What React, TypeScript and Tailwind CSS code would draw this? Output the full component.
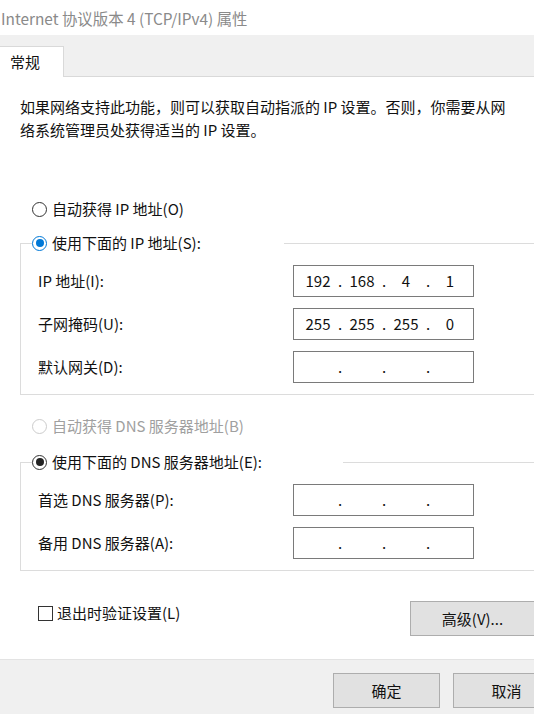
import { Fragment } from "react";

type RadioState = "off" | "blue" | "dark" | "disabled";

const Radio = ({ state }: { state: RadioState }) => {
  const ring =
    state === "blue" ? "border-[#0078d7]" : state === "disabled" ? "border-[#cccccc]" : "border-[#333333]";
  return (
    <span className={`flex h-[15px] w-[15px] shrink-0 items-center justify-center rounded-full border bg-white ${ring}`}>
      {state === "blue" && <span className="h-[8px] w-[8px] rounded-full bg-[#0078d7]" />}
      {state === "dark" && <span className="h-[8px] w-[8px] rounded-full bg-[#222222]" />}
    </span>
  );
};

const RadioRow = ({ state, label }: { state: RadioState; label: string }) => (
  <div className={`flex h-[22px] items-center gap-[5px] ${state === "disabled" ? "text-[#a0a0a0]" : "text-[#111]"}`}>
    <Radio state={state} />
    <span>{label}</span>
  </div>
);

const IpBox = ({ parts }: { parts: string[] }) => (
  <div className="flex h-[32px] w-[181px] items-center border border-[#7a7a7a] bg-white pl-[4px] text-[#111]">
    {parts.map((p, i) => (
      <Fragment key={i}>
        {i > 0 && <span className="w-[4px] text-center">.</span>}
        <span className="w-[40px] text-center">{p}</span>
      </Fragment>
    ))}
  </div>
);

const Field = ({ label, parts }: { label: string; parts: string[] }) => (
  <div className="flex items-center">
    <span className="w-[255px] text-[#111]">{label}</span>
    <IpBox parts={parts} />
  </div>
);

const Group = ({
  legend,
  legendWidth,
  radio,
  rows,
}: {
  legend: string;
  legendWidth: string;
  radio: RadioState;
  rows: { label: string; parts: string[] }[];
}) => (
  <fieldset className="ml-[20px] w-[560px] border border-[#dcdcdc] pb-[11px] pt-[11px]">
    <legend className={`ml-[11px] bg-white ${legendWidth}`}>
      <RadioRow state={radio} label={legend} />
    </legend>
    <div className="flex flex-col gap-[11px] pl-[17px]">
      {rows.map((r) => (
        <Field key={r.label} label={r.label} parts={r.parts} />
      ))}
    </div>
  </fieldset>
);

const Button = ({ label, width }: { label: string; width: string }) => (
  <button
    type="button"
    className={`h-[35px] shrink-0 border border-[#adadad] bg-[#e1e1e1] text-[15px] text-[#111] ${width}`}
  >
    {label}
  </button>
);

const empty = ["", "", "", ""];

export default function App() {
  return (
    <div className="h-[714px] w-[534px] overflow-hidden bg-white font-['Noto_Sans_CJK_SC',sans-serif] text-[15px] leading-[22px]">
      <div className="w-[600px]">
        <div className="flex h-[35px] items-center pl-[1px] text-[15.4px] text-[#8a8a8a]">
          Internet 协议版本 4 (TCP/IPv4) 属性
        </div>

        <div className="flex h-[42px] items-end bg-[#f0f0f0]">
          <div className="flex h-[31px] w-[64px] items-center border-r border-t border-[#d9d9d9] bg-white pl-[10px] text-[#111]">
            常规
          </div>
          <div className="flex-1 self-stretch border-b border-[#d9d9d9]" />
        </div>

        <div className="h-[582px] bg-white pt-[18px]">
          <p className="pl-[20px] leading-[23px] text-[#111]">
            如果网络支持此功能，则可以获取自动指派的 IP 设置。否则，你需要从网
            <br />
            络系统管理员处获得适当的 IP 设置。
          </p>

          <div className="mt-[57px] pl-[32px]">
            <RadioRow state="off" label="自动获得 IP 地址(O)" />
          </div>

          <div className="mt-[12px]">
            <Group
              legend="使用下面的 IP 地址(S):"
              legendWidth="w-[252px]"
              radio="blue"
              rows={[
                { label: "IP 地址(I):", parts: ["192", "168", "4", "1"] },
                { label: "子网掩码(U):", parts: ["255", "255", "255", "0"] },
                { label: "默认网关(D):", parts: empty },
              ]}
            />
          </div>

          <div className="mt-[20px] pl-[32px]">
            <RadioRow state="disabled" label="自动获得 DNS 服务器地址(B)" />
          </div>

          <div className="mt-[14px]">
            <Group
              legend="使用下面的 DNS 服务器地址(E):"
              legendWidth="w-[311px]"
              radio="dark"
              rows={[
                { label: "首选 DNS 服务器(P):", parts: empty },
                { label: "备用 DNS 服务器(A):", parts: empty },
              ]}
            />
          </div>

          <div className="mt-[30px] flex items-start">
            <div className="mt-[1px] flex h-[22px] w-[410px] items-center gap-[4px] pl-[38px] text-[#111]">
              <span className="h-[15px] w-[15px] shrink-0 border border-[#333333] bg-white" />
              <span>退出时验证设置(L)</span>
            </div>
            <Button label="高级(V)..." width="w-[125px]" />
          </div>
        </div>

        <div className="flex h-[55px] gap-[13px] border-t border-[#e3e3e3] bg-[#f0f0f0] pl-[333px] pt-[13px]">
          <Button label="确定" width="w-[107px]" />
          <Button label="取消" width="w-[107px]" />
        </div>
      </div>
    </div>
  );
}
